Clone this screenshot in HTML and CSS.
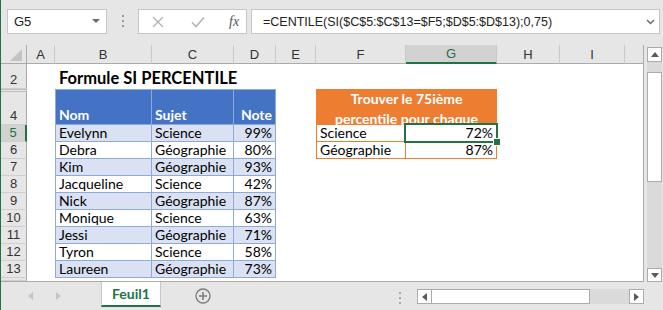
FILE: index.html
```html
<!DOCTYPE html>
<html lang="fr">
<head>
    <meta charset="UTF-8">
    <title>Formule SI PERCENTILE</title>
    <link rel="stylesheet" href="styles.css">
</head>
<body>
<div class="app">
    <div class="formula-bar">
        <div class="name-box">
            <span>G5</span>
            <svg width="8" height="5" viewBox="0 0 8 5"><polygon points="0,0 8,0 4,4" fill="#6a6a6a"/></svg>
        </div>
        <svg class="grip" width="3" height="14" viewBox="0 0 3 14"><rect x="0" y="0" width="2" height="2" fill="#9a9a9a"/><rect x="0" y="5" width="2" height="2" fill="#9a9a9a"/><rect x="0" y="10" width="2" height="2" fill="#9a9a9a"/></svg>
        <div class="fx-box">
            <svg width="12" height="12" viewBox="0 0 12 12"><path d="M1 1 L11 11 M11 1 L1 11" stroke="#b4b4b4" stroke-width="1.4"/></svg>
            <svg width="14" height="12" viewBox="0 0 14 12"><path d="M1 6.5 L5 10.5 L13 1.5" stroke="#b4b4b4" stroke-width="1.6" fill="none"/></svg>
            <span class="fx">fx</span>
        </div>
        <div class="formula">
            <span>=CENTILE(SI($C$5:$C$13=$F5;$D$5:$D$13);0,75)</span>
            <svg width="9" height="6" viewBox="0 0 9 6"><path d="M1 1 L4.5 4.5 L8 1" stroke="#6a6a6a" stroke-width="1.5" fill="none"/></svg>
        </div>
    </div>

    <div class="workbook">
        <div class="sheet">
            <div class="row head">
                <div class="corner"><svg width="12" height="12" viewBox="0 0 12 12"><polygon points="12,0 12,12 0,12" fill="#c3c3c3"/></svg></div>
                <div class="ch">A</div>
                <div class="ch">B</div>
                <div class="ch">C</div>
                <div class="ch">D</div>
                <div class="ch">E</div>
                <div class="ch">F</div>
                <div class="ch sel">G</div>
                <div class="ch">H</div>
                <div class="ch">I</div>
                <div class="ch last"></div>
            </div>

            <div class="row r2">
                <div class="rh">2</div>
                <div></div>
                <div class="title">Formule SI PERCENTILE</div>
            </div>

            <div class="row r4">
                <div class="rh hidden-above">4</div>
                <div></div>
                <div class="th first">Nom</div>
                <div class="th">Sujet</div>
                <div class="th num">Note</div>
                <div></div>
                <div class="oh">Trouver le 75ième<br>percentile pour chaque</div>
            </div>

            <div class="row">
                <div class="rh sel">5</div>
                <div></div>
                <div class="td first band">Evelynn</div>
                <div class="td band">Science</div>
                <div class="td num band">99%</div>
                <div></div>
                <div class="od first">Science</div>
                <div class="od num active">72%</div>
            </div>
            <div class="row">
                <div class="rh">6</div>
                <div></div>
                <div class="td first">Debra</div>
                <div class="td">Géographie</div>
                <div class="td num">80%</div>
                <div></div>
                <div class="od first">Géographie</div>
                <div class="od num">87%</div>
            </div>
            <div class="row">
                <div class="rh">7</div>
                <div></div>
                <div class="td first band">Kim</div>
                <div class="td band">Géographie</div>
                <div class="td num band">93%</div>
            </div>
            <div class="row">
                <div class="rh">8</div>
                <div></div>
                <div class="td first">Jacqueline</div>
                <div class="td">Science</div>
                <div class="td num">42%</div>
            </div>
            <div class="row">
                <div class="rh">9</div>
                <div></div>
                <div class="td first band">Nick</div>
                <div class="td band">Géographie</div>
                <div class="td num band">87%</div>
            </div>
            <div class="row">
                <div class="rh">10</div>
                <div></div>
                <div class="td first">Monique</div>
                <div class="td">Science</div>
                <div class="td num">63%</div>
            </div>
            <div class="row">
                <div class="rh">11</div>
                <div></div>
                <div class="td first band">Jessi</div>
                <div class="td band">Géographie</div>
                <div class="td num band">71%</div>
            </div>
            <div class="row">
                <div class="rh">12</div>
                <div></div>
                <div class="td first">Tyron</div>
                <div class="td">Science</div>
                <div class="td num">58%</div>
            </div>
            <div class="row">
                <div class="rh">13</div>
                <div></div>
                <div class="td first band">Laureen</div>
                <div class="td band">Géographie</div>
                <div class="td num band">73%</div>
            </div>
            <div class="row r14">
                <div class="rh"></div>
            </div>
        </div>

        <div class="vscroll">
            <div class="sbtn up"><svg width="8" height="5" viewBox="0 0 8 5"><polygon points="0,5 8,5 4,0" fill="#5a5a5a"/></svg></div>
            <div class="vtrack"><div class="vthumb"></div></div>
            <div class="sbtn down"><svg width="8" height="5" viewBox="0 0 8 5"><polygon points="0,0 8,0 4,5" fill="#5a5a5a"/></svg></div>
        </div>
    </div>

    <div class="tabs">
        <div class="tab-nav">
            <svg width="5" height="8" viewBox="0 0 5 8"><polygon points="5,0 5,8 0,4" fill="#c4c4c4"/></svg>
            <svg width="5" height="8" viewBox="0 0 5 8"><polygon points="0,0 0,8 5,4" fill="#c4c4c4"/></svg>
        </div>
        <div class="tab">Feuil1</div>
        <svg class="add" width="16" height="16" viewBox="0 0 16 16"><circle cx="8" cy="8" r="7" stroke="#7b7b7b" stroke-width="1.3" fill="none"/><path d="M8 4 V12 M4 8 H12" stroke="#7b7b7b" stroke-width="1.5"/></svg>
        <svg class="grip2" width="3" height="12" viewBox="0 0 3 12"><rect x="0" y="0" width="2" height="2" fill="#a8a8a8"/><rect x="0" y="5" width="2" height="2" fill="#a8a8a8"/><rect x="0" y="10" width="2" height="2" fill="#a8a8a8"/></svg>
        <div class="hscroll">
            <div class="sbtn"><svg width="5" height="8" viewBox="0 0 5 8"><polygon points="5,0 5,8 0,4" fill="#5a5a5a"/></svg></div>
            <div class="hthumb"></div>
            <div class="htrack"></div>
            <div class="sbtn"><svg width="5" height="8" viewBox="0 0 5 8"><polygon points="0,0 0,8 5,4" fill="#5a5a5a"/></svg></div>
        </div>
    </div>
</div>
</body>
</html>
```

FILE: styles.css
```css
* {
    box-sizing: border-box;
}

body {
    margin: 0;
    width: 663px;
    height: 310px;
    overflow: hidden;
    background-color: #e6e6e6;
    font-family: 'Liberation Sans', Arial, sans-serif;
    color: #222;
}

.app {
    height: 310px;
    border-left: 1px solid #217346;
}

/* formula bar */
.formula-bar {
    height: 45px;
    display: flex;
    align-items: flex-start;
    padding-top: 9px;
}

.name-box {
    margin-left: 6px;
    width: 100px;
    height: 25px;
    background-color: #fff;
    border: 1px solid #c6c6c6;
    display: flex;
    align-items: center;
    justify-content: space-between;
    padding: 0 6px 0 6px;
    font-size: 13px;
}

.grip {
    margin: 6px 0 0 15px;
}

.fx-box {
    margin-left: 13px;
    width: 109px;
    height: 25px;
    background-color: #fff;
    border: 1px solid #c6c6c6;
    display: flex;
    align-items: center;
    padding-left: 13px;
}

.fx-box svg + svg {
    margin-left: 27px;
}

.fx {
    margin-left: 24px;
    font-family: 'Liberation Serif', serif;
    font-style: italic;
    font-size: 14px;
    color: #555;
}

.formula {
    margin-left: 4px;
    width: 409px;
    height: 25px;
    background-color: #fff;
    border: 1px solid #c6c6c6;
    display: flex;
    align-items: center;
    justify-content: space-between;
    padding: 0 4px 0 11px;
    font-size: 12.5px;
}

/* sheet grid */
.workbook {
    display: flex;
    height: 237px;
}

.sheet {
    width: 643px;
    height: 237px;
    background-color: #fff;
    border-right: 1px solid #ababab;
    border-bottom: 1px solid #ababab;
    overflow: hidden;
    font-family: Lato, 'Liberation Sans', sans-serif;
    font-size: 14px;
}

.row {
    display: grid;
    grid-template-columns: 26px 28px 97px 82px 42px 40px 90px 91px 63px 65px 18px;
    height: 17px;
}

.row.head {
    height: 19px;
    background-color: #e6e6e6;
}

.row.r2 {
    height: 25px;
}

.row.r4 {
    height: 36px;
}

.row.r14 {
    height: 3px;
}

.corner {
    display: flex;
    align-items: flex-end;
    justify-content: flex-end;
    padding: 0 4px 2px 0;
    border-right: 1px solid #ababab;
    border-bottom: 1px solid #ababab;
}

.ch {
    display: flex;
    align-items: center;
    justify-content: center;
    font-family: 'Liberation Sans', Arial, sans-serif;
    font-size: 13px;
    color: #333;
    border-right: 1px solid #c9c9c9;
    border-bottom: 1px solid #ababab;
}

.ch.sel {
    background-color: #d2d2d2;
    color: #217346;
    border-bottom: 2px solid #217346;
}

.ch.last {
    border-right: none;
}

.rh {
    display: flex;
    align-items: flex-end;
    justify-content: center;
    padding-bottom: 0;
    line-height: 16px;
    background-color: #e6e6e6;
    font-family: 'Liberation Sans', Arial, sans-serif;
    font-size: 13px;
    color: #333;
    border-right: 1px solid #ababab;
    border-bottom: 1px solid #cfcfcf;
}

.rh.hidden-above {
    border-top: 3px double #bdbdbd;
}

.rh.sel {
    background-color: #d2d2d2;
    color: #217346;
    border-right: 2px solid #217346;
}

.title {
    grid-column: span 5;
    white-space: nowrap;
    display: flex;
    align-items: flex-end;
    padding: 0 0 1px 4px;
    font-weight: bold;
    font-size: 16.5px;
    color: #000;
}

/* blue table */
.th,
.td {
    display: flex;
    align-items: flex-end;
    padding: 0 3px 0 3px;
    line-height: 16px;
    white-space: nowrap;
    border-right: 1px solid #8ea9db;
    border-bottom: 1px solid #8ea9db;
}

.th {
    background-color: #4472c4;
    color: #fff;
    font-weight: bold;
    border-top: 1px solid #8ea9db;
    padding-bottom: 1px;
}

.td {
    color: #000;
}

.th.first,
.td.first {
    border-left: 1px solid #8ea9db;
}

.band {
    background-color: #d9e1f2;
}

.num {
    justify-content: flex-end;
}

/* orange table */
.oh {
    grid-column: span 2;
    background-color: #ed7d31;
    color: #fff;
    font-weight: bold;
    text-align: center;
    line-height: 20px;
    overflow: hidden;
    white-space: nowrap;
}

.od {
    display: flex;
    align-items: flex-end;
    padding: 0 3px 0 3px;
    line-height: 16px;
    color: #000;
    border-right: 1px solid #ed7d31;
    border-bottom: 1px solid #ed7d31;
}

.od.first {
    border-left: 1px solid #ed7d31;
}

.active {
    position: relative;
}

.active::before {
    content: '';
    position: absolute;
    top: -2px;
    left: -2px;
    right: -2px;
    bottom: -2px;
    border: 2px solid #217346;
}

.active::after {
    content: '';
    position: absolute;
    right: -5px;
    bottom: -5px;
    width: 6px;
    height: 6px;
    background-color: #217346;
    border: 1px solid #fff;
}

/* scroll bars */
.vscroll {
    width: 19px;
    padding: 2px 1px 0 3px;
    display: flex;
    flex-direction: column;
}

.sbtn {
    width: 15px;
    height: 15px;
    background-color: #fff;
    border: 1px solid #ababab;
    display: flex;
    align-items: center;
    justify-content: center;
    flex-shrink: 0;
}

.sbtn.down {
    height: 14px;
}

.vtrack {
    flex: 1;
    background-color: #dadada;
    padding-top: 10px;
}

.vthumb {
    height: 110px;
    background-color: #fff;
    border: 1px solid #ababab;
}

.tabs {
    height: 28px;
    display: flex;
    align-items: flex-start;
}

.tab-nav {
    width: 100px;
    height: 28px;
    display: flex;
    align-items: center;
    padding-left: 27px;
}

.tab-nav svg + svg {
    margin-left: 23px;
}

.tab {
    width: 60px;
    height: 25px;
    background-color: #fff;
    border-left: 1px solid #c6c6c6;
    border-right: 1px solid #c6c6c6;
    border-bottom: 2px solid #217346;
    display: flex;
    align-items: center;
    justify-content: center;
    font-family: Lato, 'Liberation Sans', sans-serif;
    font-weight: bold;
    font-size: 14px;
    color: #217346;
}

.add {
    margin: 6px 0 0 34px;
}

.grip2 {
    margin: 10px 0 0 188px;
}

.hscroll {
    margin: 7px 0 0 15px;
    width: 227px;
    height: 15px;
    display: flex;
}

.hthumb {
    width: 158px;
    background-color: #fff;
    border: 1px solid #ababab;
    border-left: none;
}

.htrack {
    flex: 1;
    background-color: #dadada;
}
```
